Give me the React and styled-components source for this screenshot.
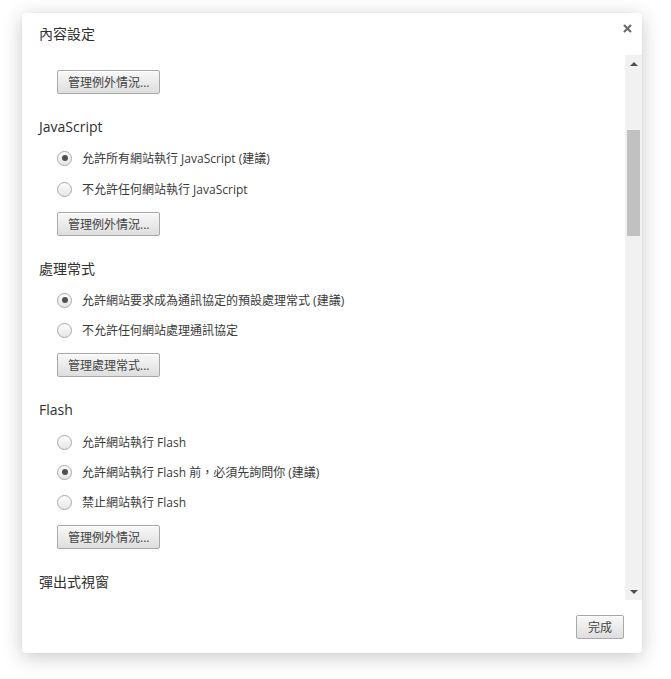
import React from "react";
import styled, { createGlobalStyle } from "styled-components";

const GlobalStyle = createGlobalStyle`
    html, body {
        margin: 0;
        padding: 0;
        background: #ffffff;
    }
    body {
        font-family: "Open Sans", "Noto Sans CJK TC", sans-serif;
        color: #303030;
    }
`;

const Page = styled.div`
    width: 671px;
    height: 679px;
    padding: 13px 0 0 22px;
    box-sizing: border-box;
`;

const Dialog = styled.div`
    width: 620px;
    height: 640px;
    background: #fff;
    border-radius: 2px;
    box-shadow: 0 4px 20px rgba(0, 0, 0, 0.22), 0 0 1px rgba(0, 0, 0, 0.15);
    display: flex;
    flex-direction: column;
    overflow: hidden;
`;

const Header = styled.div`
    height: 42px;
    display: flex;
    align-items: flex-start;
    justify-content: space-between;
    padding: 0 0 0 17px;
    flex-shrink: 0;
`;

const Title = styled.h1`
    margin: 11px 0 0;
    font-size: 14px;
    font-weight: normal;
    line-height: 20px;
    color: #303030;
`;

const Close = styled.button`
    border: 0;
    background: none;
    padding: 0;
    margin: 7px 7px 0 0;
    width: 16px;
    height: 16px;
    display: flex;
    align-items: center;
    justify-content: center;
    cursor: pointer;
`;

const Body = styled.div`
    flex: 1;
    display: flex;
    min-height: 0;
`;

const Content = styled.div`
    flex: 1;
    overflow: hidden;
    padding: 15px 0 0 17px;
`;

const Section = styled.div`
    display: flex;
    flex-direction: column;
    align-items: flex-start;
    margin-top: ${p => (p.first ? 0 : 23)}px;
`;

const Heading = styled.h2`
    margin: 0 0 ${p => p.gap ?? 11}px;
    font-size: 14px;
    font-weight: normal;
    line-height: 20px;
    color: #303030;
`;

const Options = styled.div`
    display: flex;
    flex-direction: column;
    gap: ${p => p.gap}px;
    margin-left: 18px;
    margin-bottom: 13px;
`;

const Option = styled.label`
    display: flex;
    align-items: center;
    gap: 10px;
    height: 20px;
    font-size: 12px;
    color: #3a3a3a;
`;

const Radio = styled.span`
    width: 13px;
    height: 13px;
    border-radius: 50%;
    border: 1px solid #a9a9a9;
    background: linear-gradient(#fdfdfd, #e6e6e6);
    display: flex;
    align-items: center;
    justify-content: center;
    &::after {
        content: "";
        width: 6px;
        height: 6px;
        border-radius: 50%;
        background: #505050;
        display: ${p => (p.checked ? "block" : "none")};
    }
`;

const Button = styled.button`
    margin-left: ${p => (p.indent ? 18 : 0)}px;
    height: 24px;
    padding: 0 10px;
    font-family: inherit;
    font-size: 12px;
    color: #444;
    border: 1px solid #a8a8a8;
    border-radius: 2px;
    background: linear-gradient(#f8f8f8, #dedede);
    box-shadow: inset 0 1px 0 #fff;
    cursor: pointer;
`;

const Scrollbar = styled.div`
    width: 17px;
    background: #f1f1f1;
    display: flex;
    flex-direction: column;
    align-items: center;
    flex-shrink: 0;
`;

const Arrow = styled.div`
    height: 17px;
    width: 17px;
    display: flex;
    align-items: center;
    justify-content: center;
    &::before {
        content: "";
        border-left: 4px solid transparent;
        border-right: 4px solid transparent;
        ${p => (p.down ? "border-top: 4px solid #505050;" : "border-bottom: 4px solid #505050;")}
    }
`;

const Track = styled.div`
    flex: 1;
    width: 100%;
    display: flex;
    justify-content: center;
    padding-top: 58px;
`;

const Thumb = styled.div`
    width: 13px;
    height: 106px;
    background: #c1c1c1;
`;

const Footer = styled.div`
    height: 53px;
    display: flex;
    justify-content: flex-end;
    align-items: flex-start;
    padding: 15px 18px 0 0;
    box-sizing: border-box;
    flex-shrink: 0;
`;

const DoneButton = styled(Button)`
    width: 48px;
    padding: 0;
    font-size: 12px;
`;

const sections = [
    {
        title: "JavaScript",
        gap: 11,
        options: [
            { label: "允許所有網站執行 JavaScript (建議)", checked: true },
            { label: "不允許任何網站執行 JavaScript" },
        ],
        button: "管理例外情況...",
    },
    {
        title: "處理常式",
        gap: 10,
        options: [
            { label: "允許網站要求成為通訊協定的預設處理常式 (建議)", checked: true },
            { label: "不允許任何網站處理通訊協定" },
        ],
        button: "管理處理常式...",
    },
    {
        title: "Flash",
        headGap: 12,
        gap: 10,
        options: [
            { label: "允許網站執行 Flash" },
            { label: "允許網站執行 Flash 前，必須先詢問你 (建議)", checked: true },
            { label: "禁止網站執行 Flash" },
        ],
        button: "管理例外情況...",
    },
];

const App = () => (
    <Page>
        <GlobalStyle />
        <Dialog>
            <Header>
                <Title>內容設定</Title>
                <Close aria-label="關閉">
                    <svg width="9" height="9" viewBox="0 0 9 9">
                        <path d="M1 1 L8 8 M8 1 L1 8" stroke="#6e6e6e" strokeWidth="2.2" />
                    </svg>
                </Close>
            </Header>
            <Body>
                <Content>
                    <Section first>
                        <Button indent>管理例外情況...</Button>
                    </Section>
                    {sections.map(s => (
                        <Section key={s.title}>
                            <Heading gap={s.headGap}>{s.title}</Heading>
                            <Options gap={s.gap}>
                                {s.options.map(o => (
                                    <Option key={o.label}>
                                        <Radio checked={o.checked} />
                                        {o.label}
                                    </Option>
                                ))}
                            </Options>
                            <Button indent>{s.button}</Button>
                        </Section>
                    ))}
                    <Section>
                        <Heading>彈出式視窗</Heading>
                    </Section>
                </Content>
                <Scrollbar>
                    <Arrow />
                    <Track>
                        <Thumb />
                    </Track>
                    <Arrow down />
                </Scrollbar>
            </Body>
            <Footer>
                <DoneButton>完成</DoneButton>
            </Footer>
        </Dialog>
    </Page>
);

export default App;
